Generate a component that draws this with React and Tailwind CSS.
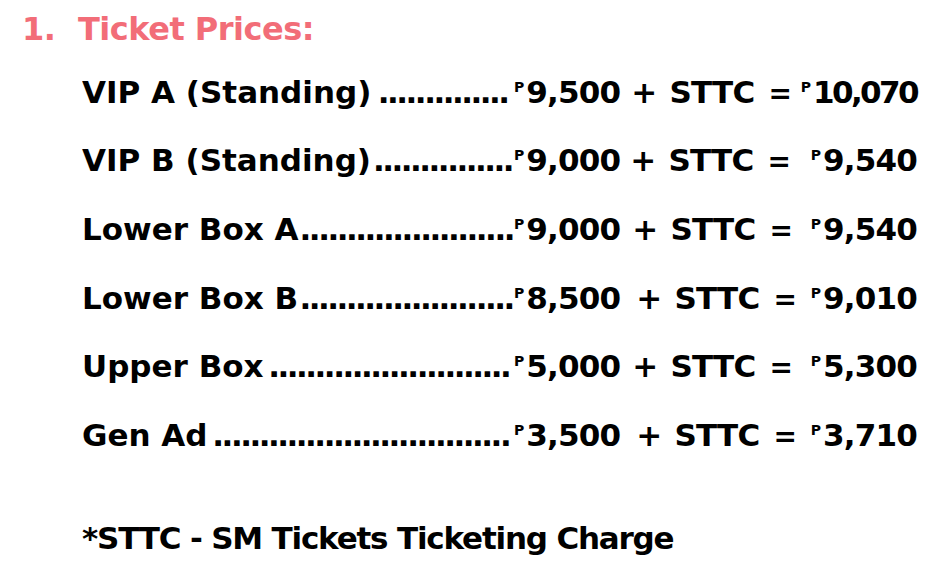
import React from "react";

const rows = [
  ["VIP A (Standing)", 14, "9,500", "ml-[11px]", "10,070", "tracking-[-2.6px]"],
  ["VIP B (Standing)", 15, "9,000", "ml-[10px]", "9,540", ""],
  ["Lower Box A", 23, "9,000", "ml-[12px]", "9,540", ""],
  ["Lower Box B", 23, "8,500", "ml-[16px]", "9,010", ""],
  ["Upper Box", 26, "5,000", "ml-[12px]", "5,300", ""],
  ["Gen Ad", 32, "3,500", "ml-[16px]", "3,710", ""],
];

function Amount({ value, cls = "" }) {
  return (
    <span className="whitespace-nowrap">
      <span className="text-[14px] relative top-[-11px] mr-[2px] font-bold tracking-normal">P</span>
      <span className={cls}>{value}</span>
    </span>
  );
}

export default function App() {
  return (
    <div
      className="w-[948px] h-[568px] bg-white text-black overflow-hidden"
      style={{ fontFamily: '"DejaVu Sans", "Liberation Sans", sans-serif' }}
    >
      <div className="h-[57.7px] flex items-center pl-[22px] text-[#f26d78] font-bold text-[32px] tracking-[-0.5px]">
        <span className="w-[56px]">1.</span>
        <span>Ticket Prices:</span>
      </div>
      <div className="flex flex-col pl-[82px] pr-[31px] font-bold text-[31px]">
        {rows.map(([label, dots, price, plusGap, total, totCls]) => (
          <div key={label} className="h-[68.6px] flex items-center whitespace-nowrap">
            <div className="w-[432px] flex items-baseline overflow-hidden">
              <span className="shrink-0">{label}</span>
              <span className="flex-1 overflow-hidden flex justify-center">
                <span className="tracking-[-2.5px]">{".".repeat(dots)}</span>
              </span>
            </div>
            <div className="flex-1 flex items-baseline tracking-[-0.8px]">
              <Amount value={price} />
              <span className={plusGap}>+</span>
              <span className="ml-[13px]">STTC</span>
              <span className="ml-[14px] text-[28px]">=</span>
              <span className="flex-1 text-right">
                <Amount value={total} cls={totCls} />
              </span>
            </div>
          </div>
        ))}
        <div className="mt-[48.7px] h-[40px] flex items-center tracking-[-1.2px]">
          *STTC - SM Tickets Ticketing Charge
        </div>
      </div>
    </div>
  );
}
